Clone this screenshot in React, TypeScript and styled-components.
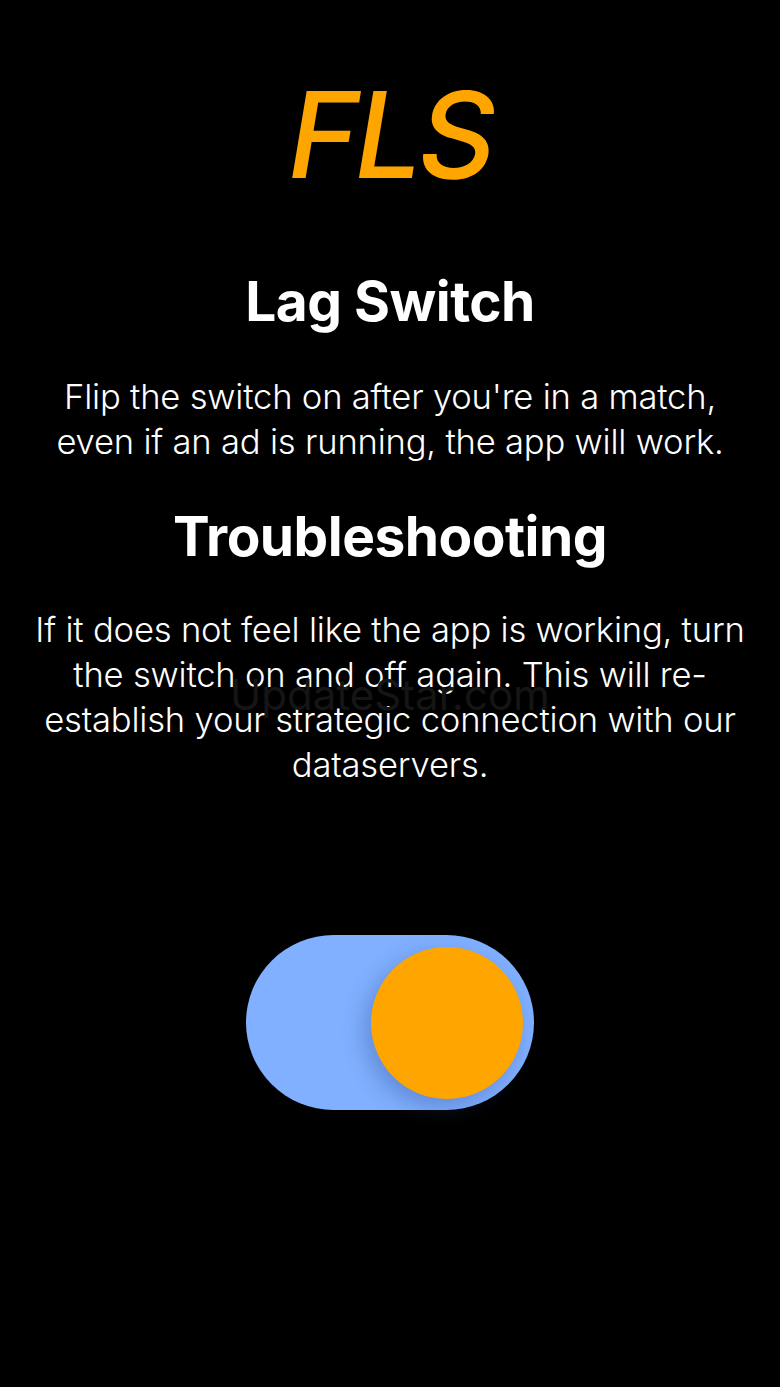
import React, { useState } from 'react';
import styled, { createGlobalStyle } from 'styled-components';

const GlobalStyle = createGlobalStyle`
  html, body {
    margin: 0;
    padding: 0;
    background: #000;
  }
  body {
    font-family: Inter, "Noto Sans", sans-serif;
    color: #fff;
  }
`;

const Screen = styled.main`
  position: relative;
  width: 780px;
  min-height: 1387px;
  background: #000;
  display: flex;
  flex-direction: column;
  align-items: center;
  text-align: center;
  padding-top: 72px;
  box-sizing: border-box;
`;

const Logo = styled.h1`
  margin: 0;
  font-size: 120px;
  font-weight: 500;
  font-style: italic;
  line-height: 126px;
  color: #ffa500;
  letter-spacing: -4px;
`;

const Heading = styled.h2<{ $top: number }>`
  margin: ${({ $top }) => $top}px 0 0;
  font-size: 55px;
  font-weight: 700;
  line-height: 64px;
  letter-spacing: -0.5px;
`;

const Body = styled.p<{ $top: number }>`
  margin: ${({ $top }) => $top}px 0 0;
  padding: 0 16px;
  font-size: 34.6px;
  font-weight: 300;
  line-height: 45px;
  letter-spacing: -0.2px;
`;

// faint watermark that sits over the troubleshooting text
const Watermark = styled.div`
  position: absolute;
  top: 670px;
  left: 0;
  right: 0;
  text-align: center;
  font-size: 42px;
  font-weight: 400;
  line-height: 50px;
  color: #151515;
  pointer-events: none;
`;

const Track = styled.button<{ $on: boolean }>`
  margin-top: 148px;
  width: 288px;
  height: 175px;
  border: none;
  border-radius: 88px;
  background: #80b0ff;
  padding: 0 11px;
  display: flex;
  align-items: center;
  justify-content: ${({ $on }) => ($on ? 'flex-end' : 'flex-start')};
  cursor: pointer;
`;

const Knob = styled.span`
  width: 152px;
  height: 152px;
  border-radius: 50%;
  background: #ffa500;
  box-shadow: -6px 8px 22px rgba(40, 70, 140, 0.35);
`;

export default function App() {
  const [on, setOn] = useState(true);
  return (
    <>
      <GlobalStyle />
      <Screen>
        <Logo>FLS</Logo>
        <Heading $top={71}>Lag Switch</Heading>
        <Body $top={41}>
          Flip the switch on after you're in a match,
          <br />
          even if an ad is running, the app will work.
        </Body>
        <Heading $top={40}>Troubleshooting</Heading>
        <Body $top={39}>
          If it does not feel like the app is working, turn the switch on and off again. This will re-establish your
          strategic connection with our dataservers.
        </Body>
        <Watermark>UpdateStar.com</Watermark>
        <Track $on={on} onClick={() => setOn(!on)} aria-label="Lag switch">
          <Knob />
        </Track>
      </Screen>
    </>
  );
}
